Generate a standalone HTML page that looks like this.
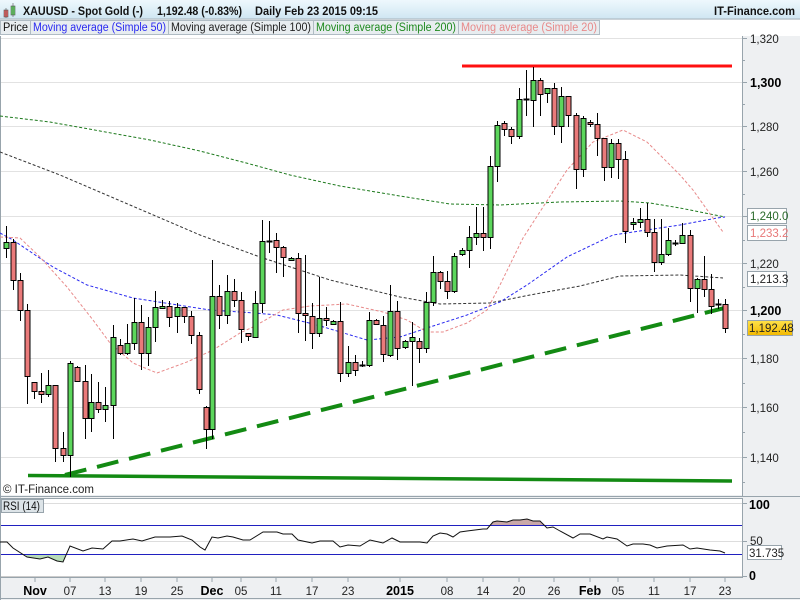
<!DOCTYPE html>
<html><head><meta charset="utf-8"><style>
body{margin:0;width:800px;height:600px;overflow:hidden;background:#fff;font-family:"Liberation Sans",sans-serif}
svg{display:block}
</style></head><body>
<svg width="800" height="600" xmlns="http://www.w3.org/2000/svg" font-family="Liberation Sans, sans-serif">
<defs>
<linearGradient id="hdr" x1="0" y1="0" x2="0" y2="1"><stop offset="0" stop-color="#eef8fd"/><stop offset="1" stop-color="#cfe6f2"/></linearGradient>
<linearGradient id="gold" x1="0" y1="0" x2="0" y2="1"><stop offset="0" stop-color="#ffe24a"/><stop offset="1" stop-color="#f2b800"/></linearGradient>
</defs>
<rect width="800" height="600" fill="#eef0f2"/>
<rect x="0" y="0" width="800" height="19" fill="url(#hdr)"/>
<line x1="0" y1="19" x2="800" y2="19" stroke="#a8b4bc"/>
<rect x="4" y="10" width="4" height="7" fill="#e86060" stroke="#555" stroke-width="0.6"/>
<line x1="6" y1="8" x2="6" y2="18" stroke="#555" stroke-width="0.6"/>
<rect x="11" y="6" width="4" height="9" fill="#5fd35f" stroke="#555" stroke-width="0.6"/>
<line x1="13" y1="3" x2="13" y2="17" stroke="#555" stroke-width="0.6"/>
<g font-size="12" font-weight="bold" fill="#111">
<text x="23" y="15" textLength="120" lengthAdjust="spacingAndGlyphs">XAUUSD - Spot Gold (-)</text>
<text x="157" y="15" textLength="85" lengthAdjust="spacingAndGlyphs">1,192.48 (-0.83%)</text>
<text x="255" y="15" textLength="123" lengthAdjust="spacingAndGlyphs">Daily  Feb 23 2015 09:15</text>
<text x="714" y="15" textLength="81" lengthAdjust="spacingAndGlyphs">IT-Finance.com</text>
</g>
<rect x="0" y="20" width="800" height="16" fill="#fff"/>
<rect x="0" y="20" width="600" height="15" fill="#e8edf0"/>
<g font-size="11.5" stroke="none">
<rect x="0.5" y="20.5" width="30" height="14" fill="none" stroke="#b0bcc4"/><text x="3" y="31" fill="#111" textLength="25" lengthAdjust="spacingAndGlyphs">Price</text>
<rect x="30.5" y="20.5" width="138" height="14" fill="none" stroke="#b0bcc4"/><text x="33" y="31" fill="#2a2af0" textLength="133" lengthAdjust="spacingAndGlyphs">Moving average (Simple 50)</text>
<rect x="168.5" y="20.5" width="145" height="14" fill="none" stroke="#b0bcc4"/><text x="171" y="31" fill="#222" textLength="140" lengthAdjust="spacingAndGlyphs">Moving average (Simple 100)</text>
<rect x="313.5" y="20.5" width="145" height="14" fill="none" stroke="#b0bcc4"/><text x="316" y="31" fill="#1e8a1e" textLength="140" lengthAdjust="spacingAndGlyphs">Moving average (Simple 200)</text>
<rect x="458.5" y="20.5" width="141" height="14" fill="none" stroke="#b0bcc4"/><text x="461" y="31" fill="#e88a8a" textLength="136" lengthAdjust="spacingAndGlyphs">Moving average (Simple 20)</text>
</g>
<rect x="1" y="36" width="741" height="459" fill="#fff"/>
<line x1="742.5" y1="36" x2="742.5" y2="496" stroke="#98a4ac"/>
<line x1="0.5" y1="36" x2="0.5" y2="600" stroke="#98a4ac"/>
<g stroke="#e2e2e2" stroke-width="1">
<line x1="1" y1="38.5" x2="742" y2="38.5"/><line x1="1" y1="82.5" x2="742" y2="82.5"/><line x1="1" y1="126.5" x2="742" y2="126.5"/><line x1="1" y1="171.5" x2="742" y2="171.5"/><line x1="1" y1="216.5" x2="742" y2="216.5"/><line x1="1" y1="263.5" x2="742" y2="263.5"/><line x1="1" y1="310.5" x2="742" y2="310.5"/><line x1="1" y1="358.5" x2="742" y2="358.5"/><line x1="1" y1="407.5" x2="742" y2="407.5"/><line x1="1" y1="457.5" x2="742" y2="457.5"/>
</g>
<g stroke="#98a4ac">
<line x1="742" y1="38.5" x2="747" y2="38.5"/><line x1="742" y1="60.5" x2="745" y2="60.5"/><line x1="742" y1="82.5" x2="747" y2="82.5"/><line x1="742" y1="104.5" x2="745" y2="104.5"/><line x1="742" y1="126.5" x2="747" y2="126.5"/><line x1="742" y1="149.5" x2="745" y2="149.5"/><line x1="742" y1="171.5" x2="747" y2="171.5"/><line x1="742" y1="194.5" x2="745" y2="194.5"/><line x1="742" y1="216.5" x2="747" y2="216.5"/><line x1="742" y1="240.5" x2="745" y2="240.5"/><line x1="742" y1="263.5" x2="747" y2="263.5"/><line x1="742" y1="287.5" x2="745" y2="287.5"/><line x1="742" y1="310.5" x2="747" y2="310.5"/><line x1="742" y1="334.5" x2="745" y2="334.5"/><line x1="742" y1="358.5" x2="747" y2="358.5"/><line x1="742" y1="383.5" x2="745" y2="383.5"/><line x1="742" y1="407.5" x2="747" y2="407.5"/><line x1="742" y1="432.5" x2="745" y2="432.5"/><line x1="742" y1="457.5" x2="747" y2="457.5"/><line x1="742" y1="482.5" x2="745" y2="482.5"/>
</g>
<g font-size="11.5" fill="#222">
<text x="750" y="43">1,320</text><text x="750" y="87" font-weight="bold" font-size="12.5" fill="#000">1,300</text><text x="750" y="131">1,280</text><text x="750" y="176">1,260</text><text x="750" y="268">1,220</text><text x="750" y="315" font-weight="bold" font-size="12.5" fill="#000">1,200</text><text x="750" y="363">1,180</text><text x="750" y="412">1,160</text><text x="750" y="462">1,140</text>
</g>
<rect x="747.5" y="208.5" width="39" height="15" fill="#fff" stroke="#98a4ac"/><text x="750" y="220" font-size="11.5" fill="#2a6a2a">1,240.0</text>
<rect x="747.5" y="225.5" width="39" height="15" fill="#fff" stroke="#98a4ac"/><text x="750" y="237" font-size="11.5" fill="#e87878">1,233.2</text>
<rect x="747.5" y="271.5" width="39" height="15" fill="#fff" stroke="#98a4ac"/><text x="750" y="283" font-size="11.5" fill="#222">1,213.3</text>
<rect x="747.5" y="320.5" width="45" height="15" fill="url(#gold)" stroke="#98a4ac"/><text x="749" y="332" font-size="11.5" fill="#222">1,192.48</text>
<polyline fill="none" stroke="#1e7a1e" stroke-width="1" stroke-dasharray="3,2" points="0,116 50,122 100,131 150,140 200,151 250,164 290,175 340,186 400,196 450,204 500,205 560,202 620,201 650,203 680,208 725,217"/>
<polyline fill="none" stroke="#333" stroke-width="1" stroke-dasharray="3,2" points="0,152 60,175 130,205 200,235 260,257 330,280 400,297 440,304 490,303 530,295 580,286 620,276 680,275 723,278"/>
<polyline fill="none" stroke="#2a2af0" stroke-width="1" stroke-dasharray="3,2" points="0,233 13,240 53,267 87,285 133,298 210,310 255,313 277,315 317,325 367,340 400,337 427,328 467,315 500,302 527,285 567,257 613,235 680,225 717,218 725,217"/>
<polyline fill="none" stroke="#e88a8a" stroke-width="1" stroke-dasharray="3,2" points="0,237 20,238 40,257 67,287 93,320 110,343 133,363 157,373 187,362 213,350 240,333 253,327 283,310 310,306 347,304 383,312 407,320 427,332 443,332 467,323 487,310 500,285 523,238 567,170 593,142 623,130 647,142 680,175 693,190 723,232"/>
<line x1="462" y1="66" x2="732" y2="66" stroke="#ff1010" stroke-width="3"/>
<line x1="28" y1="475.5" x2="732" y2="481" stroke="#138a13" stroke-width="3.5"/>
<line x1="65" y1="475" x2="736" y2="305" stroke="#138a13" stroke-width="4" stroke-dasharray="22,11"/>
<g id="c" stroke="#000" stroke-width="1"></g>
<text x="3" y="493" font-size="11.5" fill="#222">© IT-Finance.com</text>
<line x1="0" y1="496.5" x2="800" y2="496.5" stroke="#98a4ac"/>
<rect x="1" y="498" width="741" height="79" fill="#fff"/>
<line x1="0" y1="498.5" x2="742" y2="498.5" stroke="#98a4ac"/>
<line x1="742.5" y1="498" x2="742.5" y2="578" stroke="#98a4ac"/>
<line x1="1" y1="503.5" x2="742" y2="503.5" stroke="#ddd"/>
<line x1="1" y1="541.5" x2="742" y2="541.5" stroke="#ddd"/>
<line x1="1" y1="576.5" x2="742" y2="576.5" stroke="#ccc"/>
<rect x="1.5" y="499.5" width="42" height="13" fill="#dde4e8" stroke="#98a4ac"/>
<text x="3" y="510" font-size="11.5" fill="#111" textLength="37" lengthAdjust="spacingAndGlyphs">RSI (14)</text>
<polygon fill="#b8dcb8" points="25,554 27,557 40,559 48,557 57,561 63,562 66,554"/>
<polygon fill="#c9a8a8" points="490,525 493,522 497,521 507,522 513,520 520,520 527,519 533,521 540,521 545,525"/>
<line x1="1" y1="525.5" x2="742" y2="525.5" stroke="#2020c0"/>
<line x1="1" y1="554.5" x2="742" y2="554.5" stroke="#2020c0"/>
<polyline fill="none" stroke="#111" stroke-width="1" points="0,542 7,542 13,548 27,557 40,559 48,557 57,561 63,562 70,546 83,551 92,548 103,549 112,541 120,541 133,539 142,541 155,537 170,537 182,536 192,540 200,547 205,550 212,537 218,538 227,536 233,537 243,540 250,540 263,532 277,532 283,534 292,534 298,540 312,543 320,541 333,541 340,547 348,545 360,546 370,540 383,543 392,538 400,542 420,542 427,543 433,536 440,533 447,534 453,537 460,532 467,531 483,529 487,529 493,522 497,521 507,522 513,520 520,520 527,519 533,521 540,521 547,528 553,527 560,531 573,538 580,534 590,534 603,539 607,537 617,539 627,546 633,544 643,544 650,545 657,548 667,546 683,545 690,549 697,548 710,550 720,551 725,553"/>
<g stroke="#98a4ac"><line x1="742" y1="503.5" x2="747" y2="503.5"/><line x1="742" y1="541.5" x2="747" y2="541.5"/><line x1="742" y1="576.5" x2="747" y2="576.5"/></g>
<text x="749" y="509" font-size="12.5" font-weight="bold" fill="#000">100</text>
<text x="750" y="545" font-size="11.5" fill="#222">50</text>
<text x="749" y="580" font-size="12.5" font-weight="bold" fill="#000">0</text>
<rect x="747.5" y="545.5" width="34" height="14" fill="#fff" stroke="#98a4ac"/><text x="749" y="557" font-size="11.5" fill="#222">31.735</text>
<line x1="0" y1="577.5" x2="742" y2="577.5" stroke="#98a4ac"/>
<line x1="0" y1="598.5" x2="800" y2="598.5" stroke="#98a4ac"/>
<g stroke="#98a4ac"><line x1="35" y1="577" x2="35" y2="582"/><line x1="70" y1="577" x2="70" y2="582"/><line x1="105" y1="577" x2="105" y2="582"/><line x1="141" y1="577" x2="141" y2="582"/><line x1="177" y1="577" x2="177" y2="582"/><line x1="212" y1="577" x2="212" y2="582"/><line x1="241" y1="577" x2="241" y2="582"/><line x1="276" y1="577" x2="276" y2="582"/><line x1="312" y1="577" x2="312" y2="582"/><line x1="348" y1="577" x2="348" y2="582"/><line x1="400" y1="577" x2="400" y2="582"/><line x1="447" y1="577" x2="447" y2="582"/><line x1="483" y1="577" x2="483" y2="582"/><line x1="519" y1="577" x2="519" y2="582"/><line x1="554" y1="577" x2="554" y2="582"/><line x1="590" y1="577" x2="590" y2="582"/><line x1="618" y1="577" x2="618" y2="582"/><line x1="654" y1="577" x2="654" y2="582"/><line x1="690" y1="577" x2="690" y2="582"/><line x1="725" y1="577" x2="725" y2="582"/></g>
<g font-size="11.5" fill="#222" text-anchor="middle">
<text x="35" y="595" font-weight="bold" font-size="12.5" fill="#000">Nov</text><text x="70" y="595">07</text><text x="105" y="595">13</text><text x="141" y="595">19</text><text x="177" y="595">25</text><text x="212" y="595" font-weight="bold" font-size="12.5" fill="#000">Dec</text><text x="241" y="595">05</text><text x="276" y="595">11</text><text x="312" y="595">17</text><text x="348" y="595">23</text><text x="400" y="595" font-weight="bold" font-size="12.5" fill="#000">2015</text><text x="447" y="595">08</text><text x="483" y="595">14</text><text x="519" y="595">20</text><text x="554" y="595">26</text><text x="590" y="595" font-weight="bold" font-size="12.5" fill="#000">Feb</text><text x="618" y="595">05</text><text x="654" y="595">11</text><text x="690" y="595">17</text><text x="725" y="595">23</text>
</g>
</svg>
<script>
var d=[[6,226,258,242,248,'g'],[13,239,290,242,280,'r'],[20,273,321,280,310,'r'],[27,304,404,310,376,'r'],[34,382,399,382,391,'r'],[41,373,403,391,394,'r'],[48,370,397,385,394,'g'],[55,385,462,385,448,'r'],[63,432,462,448,455,'r'],[70,361,477,363,455,'g'],[77,366,381,367,381,'r'],[85,365,439,381,418,'r'],[91,374,432,402,418,'g'],[98,382,413,402,409,'r'],[105,387,422,405,409,'g'],[113,325,439,337,405,'g'],[120,339,355,345,353,'r'],[127,324,355,343,353,'g'],[134,298,350,322,343,'g'],[141,305,370,322,353,'r'],[148,317,366,327,353,'g'],[155,291,342,307,327,'g'],[162,300,308,306,308,'g'],[169,301,327,306,317,'r'],[177,303,333,307,316,'g'],[184,307,323,307,316,'r'],[191,311,344,316,335,'r'],[199,332,394,335,389,'r'],[206,406,449,407,429,'r'],[212,260,439,296,429,'g'],[219,285,329,296,315,'r'],[227,275,324,291,315,'g'],[234,279,307,291,300,'r'],[241,292,343,300,329,'r'],[248,333,341,333,336,'r'],[255,291,337,303,337,'g'],[262,220,313,241,303,'g'],[269,221,253,241,241,'d'],[276,233,273,240,247,'r'],[283,246,277,247,257,'r'],[291,257,261,258,260,'g'],[298,253,333,258,313,'r'],[305,255,341,313,315,'r'],[312,303,349,316,333,'r'],[319,277,337,318,333,'g'],[326,307,326,318,320,'r'],[333,320,325,321,324,'g'],[340,302,382,321,373,'r'],[348,346,377,362,373,'g'],[355,355,376,362,370,'r'],[362,361,367,365,365,'d'],[369,312,367,320,365,'g'],[376,319,325,320,324,'r'],[383,316,362,325,354,'r'],[390,285,357,311,355,'g'],[397,301,360,311,348,'r'],[405,340,349,341,347,'g'],[412,322,386,337,341,'g'],[419,338,363,341,348,'r'],[426,292,353,302,348,'g'],[433,256,306,272,302,'g'],[440,271,289,272,281,'r'],[447,271,299,281,291,'r'],[454,253,293,256,291,'g'],[462,248,256,250,254,'g'],[469,226,268,237,250,'g'],[476,207,245,233,237,'g'],[483,207,251,233,237,'r'],[490,156,249,166,237,'g'],[497,121,182,125,166,'g'],[504,121,136,123,129,'r'],[511,127,144,129,136,'r'],[519,88,139,99,136,'g'],[526,70,116,99,99,'d'],[533,67,127,80,100,'g'],[540,78,116,80,94,'r'],[547,88,103,88,93,'g'],[554,83,135,88,126,'r'],[561,87,143,96,126,'g'],[568,96,127,96,115,'r'],[576,113,189,115,169,'r'],[583,116,177,118,169,'g'],[590,120,127,122,124,'r'],[597,113,156,124,138,'r'],[604,138,181,138,167,'r'],[611,139,178,143,167,'g'],[618,139,179,143,159,'r'],[625,151,243,159,231,'r'],[633,218,230,222,224,'g'],[640,208,228,219,222,'g'],[647,203,237,219,232,'r'],[654,219,272,232,262,'r'],[661,219,265,254,262,'g'],[668,228,256,240,254,'g'],[675,240,246,243,243,'d'],[682,223,243,235,243,'g'],[690,230,302,235,288,'r'],[697,278,313,279,288,'g'],[704,256,297,279,289,'r'],[711,274,314,289,306,'r'],[718,299,309,304,304,'d'],[725,299,333,304,328,'r']];
var s='';d.forEach(function(c){var x=c[0]+0.5;s+='<line x1="'+x+'" y1="'+c[1]+'" x2="'+x+'" y2="'+c[2]+'"/>';
if(c[5]=='d'){s+='<line x1="'+(x-3)+'" y1="'+(c[3]+0.5)+'" x2="'+(x+3)+'" y2="'+(c[3]+0.5)+'" stroke-width="2"/>';}
else{var h=Math.max(c[4]-c[3],2);s+='<rect x="'+(x-2.5)+'" y="'+(c[3]+0.5)+'" width="5" height="'+h+'" fill="'+(c[5]=='g'?'#5cd65c':'#ea7a7a')+'"/>';}});
document.getElementById('c').innerHTML=s;
</script>
</body></html>
